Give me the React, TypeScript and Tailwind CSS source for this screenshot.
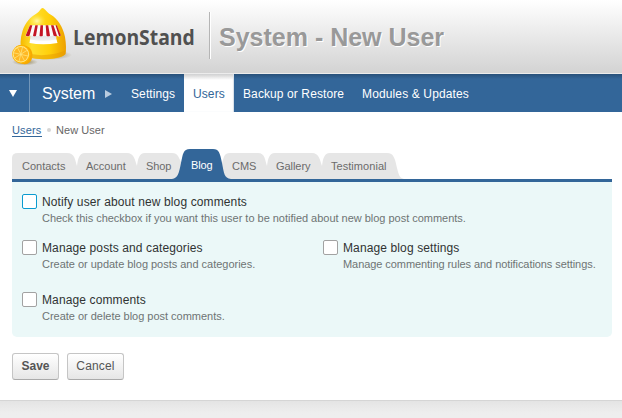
import type { ReactNode } from "react";

const sans = "font-['Liberation_Sans',Arial,sans-serif]";

function Logo() {
  return (
    <svg width="66" height="64" viewBox="0 0 66 64" className="shrink-0">
      <defs>
        <linearGradient id="body" x1="0" x2="1">
          <stop offset="0" stopColor="#f5b800" />
          <stop offset="0.25" stopColor="#ffe02e" />
          <stop offset="0.65" stopColor="#ffcf0a" />
          <stop offset="1" stopColor="#eda000" />
        </linearGradient>
        <radialGradient id="shine">
          <stop offset="0" stopColor="#fff9ae" />
          <stop offset="1" stopColor="#ffe23a" stopOpacity="0" />
        </radialGradient>
        <linearGradient id="counter" x1="0" x2="0" y1="0" y2="1">
          <stop offset="0" stopColor="#d9d9dc" />
          <stop offset="1" stopColor="#fafafa" />
        </linearGradient>
        <radialGradient id="shade">
          <stop offset="0" stopColor="#705a10" stopOpacity="0.65" />
          <stop offset="1" stopColor="#705a10" stopOpacity="0" />
        </radialGradient>
      </defs>
      <ellipse cx="41" cy="51" rx="23" ry="5" fill="url(#shade)" />
      <ellipse cx="17" cy="58" rx="13" ry="3.500" fill="url(#shade)" />
      <path d="M34.500 4C37 4.500 39 8.500 42.500 10.500C50 15 55 23 57 33C58.200 40 58.300 46 57.500 50C54 54.500 43 55.200 35 55.200C26 55.200 17 53 13.500 49C12 42 12.200 34 14.500 27C17.500 18 22.500 13 28.500 9.500C31.500 8 32.500 4.200 34.500 4Z" fill="url(#body)" />
      <ellipse cx="29" cy="17" rx="9" ry="7" fill="url(#shine)" />
      <path d="M14 48Q35 55 57.800 46.500L57.300 50.500Q49 55.200 35 55.200Q20 55.200 14 50Z" fill="#e59a00" opacity="0.5" />
      <path d="M22.500 28H48L48.500 38Q34 42 22 38Z" fill="url(#counter)" />
      <path d="M22 35.500Q35 38 48.500 35.500L49.500 39Q35 41.500 21.500 39Z" fill="#ffffff" />
      <path d="M22 21.200H48.500L52.700 31.500Q51 33.500 49 31.500Q47 33 45 31.500Q43 33 41 31.500Q38.500 33 36.500 31.500Q34 33 32 31.500Q29.500 33 27.500 31.500Q25 33 23 31.500Q19 33.500 17.500 31.500Z" fill="#fafafa" />
      <path d="M22 21.200H24.300L21.500 31.800Q19 33 17.700 31.500ZM27.300 21.200H29.800L28 31.800Q26.500 32.800 25 31.800ZM32.500 21.200H35L34.800 31.800Q33.200 32.800 31.500 31.800ZM37.700 21.200H40.200L42 31.800Q40.300 32.800 38.500 31.800ZM43 21.200H45.500L49 31.800Q47.200 33 45.500 31.600ZM47.500 21.200H48.800L52.800 31.300Q52 32.500 51 32Z" fill="#c41425" />
      <path d="M8 42.500C12 39.500 19 41 22.500 45C26 50 24.500 57 20 59.500C17 61 13 60 10 58Z" fill="#f7a900" />
      <circle cx="13.300" cy="50.200" r="9.200" fill="#ffb400" />
      <circle cx="12.900" cy="50.300" r="8.200" fill="#ffe98c" />
      <circle cx="12.900" cy="50.300" r="7.200" fill="#ffb824" />
      <path d="M9.500 43.800L16.500 56.800M14.500 43L11 57.500M18.800 46.500L6.800 54M5.700 48.800L20 52" stroke="#ffe37a" strokeWidth="0.8" />
    </svg>
  );
}

type Tab = { label: string; box: string; text: string; path: string; w: number; active?: boolean };

const tabs: Tab[] = [
  { label: "Contacts", box: "w-[65px] pl-[10px]", text: "", w: 65, path: "M0 30V9Q0 4 6 4H55C63 4 63 11 65 17V30Z" },
  { label: "Account", box: "w-[60px] pl-[9px]", text: "", w: 60, path: "M0 30V17C1 10 2 4 8 4H50C57 4 58 11 60 17V30Z" },
  { label: "Shop", box: "w-[44px] pl-[9px]", text: "tracking-[-0.1px]", w: 44, path: "M0 30V17C1 10 2 4 8 4H35C41 4 42 9 44 13V30Z" },
  { label: "Blog", box: "w-[43px] pl-[10px]", text: "tracking-[-0.1px]", w: 43, active: true, path: "M-9 30C-3 29 -2 24 0 14C2 5 2 0 9 0H32C38 0 39 4 41 14C43 24 43 29 50 30Z" },
  { label: "CMS", box: "w-[43px] pl-[8px]", text: "", w: 43, path: "M-2 30V14C0 8 0 4 6 4H34C41 4 41 11 43 17V30Z" },
  { label: "Gallery", box: "w-[55px] pl-[9px]", text: "tracking-[-0.05px]", w: 55, path: "M0 30V17C1 10 2 4 8 4H45C52 4 53 11 55 17V30Z" },
  { label: "Testimonial", box: "w-[82px] pl-[9px]", text: "tracking-[0.05px]", w: 82, path: "M0 30V17C1 10 2 4 8 4H65C72 4 73 10 75 19C77 27 78 29 82 30Z" },
];

function Permission({ title, note, noteClass = "tracking-[-0.02px]", focused = false }: { title: string; note: string; noteClass?: string; focused?: boolean }) {
  return (
    <label className="flex gap-[5px]">
      <span className={`h-[15px] w-[15px] shrink-0 rounded-[2px] border bg-white ${focused ? "border-[#0a9bd0]" : "border-[#a2a2a2]"}`} />
      <span className="block whitespace-nowrap">
        <span className="block text-[12px] leading-[16px] tracking-[0.12px] text-[#303333]">{title}</span>
        <span className={`block text-[11px] leading-[17px] text-[#6e7474] ${noteClass}`}>{note}</span>
      </span>
    </label>
  );
}

function Button({ children, className }: { children: ReactNode; className: string }) {
  return (
    <button className={`flex h-[27px] justify-center rounded-[3px] border border-[#c5c5c5] border-b-[#aaa] bg-linear-to-b from-white to-[#e6e6e6] text-[12px] leading-[24px] text-[#555] ${className}`}>
      {children}
    </button>
  );
}

export default function App() {
  return (
    <div className={`flex h-[418px] w-[622px] flex-col overflow-hidden bg-white ${sans}`}>
      <header className="flex h-[74px] shrink-0 border-b border-[#ececec] bg-linear-to-b from-white to-[#d3d3d3]">
        <div className="flex h-[68px] w-[209px] shrink-0 pt-[4px] pl-[8px]">
          <Logo />
          <span className="mt-[18px] -ml-[1px] origin-left scale-x-[0.922] font-['Open_Sans',sans-serif] text-[21px] leading-[30px] font-bold text-[#505050]">LemonStand</span>
        </div>
        <div className="mt-[12px] h-[47px] w-[2px] shrink-0 border-r border-l border-r-white border-l-[#b5b5b5]" />
        <h1 className="mt-[22px] ml-[8px] text-[25px] leading-[30px] font-bold whitespace-nowrap text-[#999] [text-shadow:1px_1px_0_#fff]">System - New User</h1>
      </header>

      <nav className="flex h-[38px] shrink-0 bg-[#336699] bg-linear-to-b from-[#28517a] to-[#336699] to-[5px] text-[12px] leading-[40px] whitespace-nowrap text-white">
        <div className="flex w-[30px] justify-center border-r border-[#7296b9] pt-[16px] pr-[3px]">
          <svg width="8" height="7" viewBox="0 0 8 7"><path d="M0 0H8L4 7Z" fill="white" /></svg>
        </div>
        <span className="w-[75px] pl-[12px] text-[16px]">System</span>
        <svg width="7" height="8" viewBox="0 0 7 8" className="mt-[16px]"><path d="M0 0L7 4L0 8Z" fill="#b9cce0" /></svg>
        <span className="w-[72px] pl-[19px] tracking-[0.1px]">Settings</span>
        <span className="w-[50px] bg-linear-to-b from-[#cfcfcf] to-white to-[6px] pl-[9px] tracking-[0.1px] text-[#336699] shadow-[inset_-1px_0_1px_#d5dfe9]">Users</span>
        <span className="w-[119px] pl-[9px] tracking-[0.1px]">Backup or Restore</span>
        <span className="pl-[9px] tracking-[0.13px]">Modules &amp; Updates</span>
      </nav>

      <div className="flex h-[37px] shrink-0 items-center pl-[12px] text-[11px] leading-[14px] text-[#666]">
        <a href="#" className="w-[30px] border-b border-[#336699] leading-[11px] tracking-[0.15px] text-[#336699]">Users</a>
        <span className="mx-[5px] -mt-[2px] h-[4px] w-[4px] rounded-full bg-[#d6d6d6]" />
        <span className="-mt-[2px] tracking-[0.05px]">New User</span>
      </div>

      <div className="flex h-[30px] shrink-0 pl-[12px] text-[11px] leading-[14px] whitespace-nowrap">
        {tabs.map((t) => (
          <div key={t.label} className={`relative ${t.box} ${t.active ? "z-10 pt-[9px] text-white" : "pt-[10px] text-[#6b6b6b]"}`}>
            <svg width={t.w} height="30" className="absolute top-0 left-0 overflow-visible">
              <path d={t.path} fill={t.active ? "#336699" : "#e6e6e6"} />
            </svg>
            <span className={`relative ${t.text}`}>{t.label}</span>
          </div>
        ))}
      </div>

      <section className="mr-[10px] ml-[12px] grid h-[158px] shrink-0 grid-cols-[301px_1fr] grid-rows-[46px_52px_1fr] rounded-b-[5px] border-t-[3px] border-[#336699] bg-[#ebf8f8] pt-[12px] pl-[10px]">
        <div className="col-span-2">
          <Permission focused title="Notify user about new blog comments" note="Check this checkbox if you want this user to be notified about new blog post comments." />
        </div>
        <Permission title="Manage posts and categories" note="Create or update blog posts and categories." />
        <Permission title="Manage blog settings" note="Manage commenting rules and notifications settings." noteClass="tracking-[-0.07px]" />
        <Permission title="Manage comments" note="Create or delete blog post comments." />
      </section>

      <div className="flex shrink-0 gap-[8px] pt-[16px] pl-[12px]">
        <Button className="w-[47px] font-bold">Save</Button>
        <Button className="w-[57px] tracking-[0.15px]">Cancel</Button>
      </div>

      <footer className="mt-[20px] flex-1 border-t border-[#d5d5d5] bg-linear-to-b from-[#e4e4e4] to-[#eeeeee] to-[12px]" />
    </div>
  );
}
